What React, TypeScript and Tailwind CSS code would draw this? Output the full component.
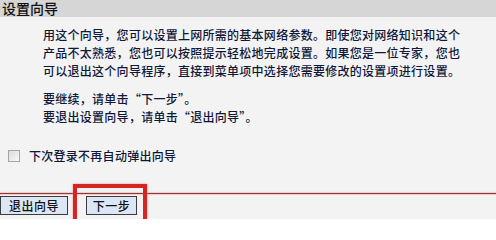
export default function App() {
  const font = "font-['SimSun','Noto_Sans_CJK_SC',sans-serif]";
  return (
    <div className={`flex h-[219px] w-[496px] flex-col overflow-hidden bg-[#f3f3f3] ${font}`}>
      <div className="h-[17px] shrink-0 bg-[#d6d6d6] pl-[2px] text-[14px] leading-[16px] font-medium text-[#111]">
        设置向导
      </div>

      <div className="pl-[43px] pt-[9px] text-[12px] font-medium leading-[18px] tracking-[0.27px] text-[#10183a]">
        <p>用这个向导，您可以设置上网所需的基本网络参数。即使您对网络知识和这个</p>
        <p>产品不太熟悉，您也可以按照提示轻松地完成设置。如果您是一位专家，您也</p>
        <p>可以退出这个向导程序，直接到菜单项中选择您需要修改的设置项进行设置。</p>
        <p className="mt-[10px]">要继续，请单击“下一步”。</p>
        <p>要退出设置向导，请单击“退出向导”。</p>
      </div>

      <label className="mt-[21px] flex h-[18px] items-center pl-[8px] text-[12px] font-medium tracking-[0.27px] text-[#10183a]">
        <span className="h-[12px] w-[12px] border border-[#a6a6a6] bg-gradient-to-br from-[#dcdcdc] to-[#f8f8f8]" />
        <span className="ml-[9px]">下次登录不再自动弹出向导</span>
      </label>

      <div className="relative mt-[28px] flex-1">
        <div className="h-px bg-[#8a3a3a] shadow-[0_0_1px_1px_#f6c8c8]" />
        <div className="mt-[2px] flex gap-[18px]">
          <button className="flex h-[19px] w-[68px] items-center justify-center border border-[#3c3c3c] bg-[#dbe6f6] text-[12px] font-medium tracking-[0.5px] text-[#111]">
            退出向导
          </button>
          <button className="flex h-[19px] w-[51px] items-center justify-center border border-[#3c3c3c] bg-[#dbe6f6] text-[12px] font-medium tracking-[0.5px] text-[#111]">
            下一步
          </button>
        </div>
        <div className="absolute left-[73px] top-[-9px] h-[40px] w-[74px] border-[4px] border-[#d42424] shadow-[0_0_2px_#e88]" />
      </div>
    </div>
  );
}
